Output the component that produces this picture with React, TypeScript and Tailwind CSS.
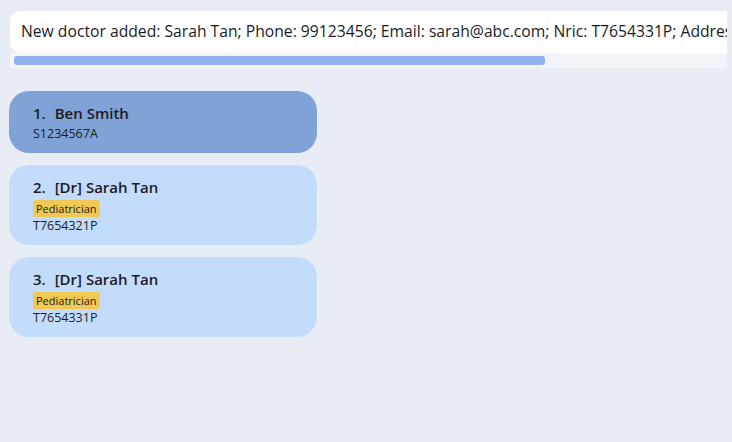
const people = [
  { id: 1, name: "Ben Smith", nric: "S1234567A", tag: null, selected: true },
  { id: 2, name: "[Dr] Sarah Tan", nric: "T7654321P", tag: "Pediatrician", selected: false },
  { id: 3, name: "[Dr] Sarah Tan", nric: "T7654331P", tag: "Pediatrician", selected: false },
];

export default function App() {
  return (
    <div
      className="w-[732px] h-[442px] bg-[#e8ecf5] overflow-hidden text-[#1b1b1f]"
      style={{ fontFamily: '"Open Sans", "Noto Sans", sans-serif' }}
    >
      {/* Result display */}
      <div className="pt-[11px] pl-[10px] w-[727px]">
        <div className="h-[42px] bg-white rounded-l-[10px] flex items-center pl-[11px] pb-[1px] overflow-hidden whitespace-nowrap">
          <span className="text-[15.7px]">
            New doctor added: Sarah Tan; Phone: 99123456; Email: sarah@abc.com; Nric: T7654331P; Address: 123 Clementi Road
          </span>
        </div>
        <div className="h-[15px] bg-[#f3f4f9] pt-[3px] pl-[4px]">
          <div className="w-[531px] h-[9px] rounded-[3px] bg-[#94b0ee]" />
        </div>
      </div>

      {/* Person list */}
      <div className="flex flex-col gap-[12px] pl-[9px] pt-[23px] w-[317px]">
        {people.map((p) => (
          <div
            key={p.id}
            className={`rounded-[20px] pl-[24px] pt-[11px] pb-[10px] ${
              p.selected ? "bg-[#7fa3d6]" : "bg-[#c3dcfc]"
            }`}
          >
            <div className="text-[15px] font-semibold leading-[22px]">
              <span>{p.id}.</span>
              <span className="ml-[9px]">{p.name}</span>
            </div>
            {p.tag && (
              <div className="mt-[2px] flex">
                <span className="bg-[#efc953] rounded-[2px] px-[3px] text-[11px] leading-[17px]">
                  {p.tag}
                </span>
              </div>
            )}
            <div className={`text-[12.5px] leading-[18px] ${p.tag ? "" : "mt-[1px]"}`}>{p.nric}</div>
          </div>
        ))}
      </div>
    </div>
  );
}
